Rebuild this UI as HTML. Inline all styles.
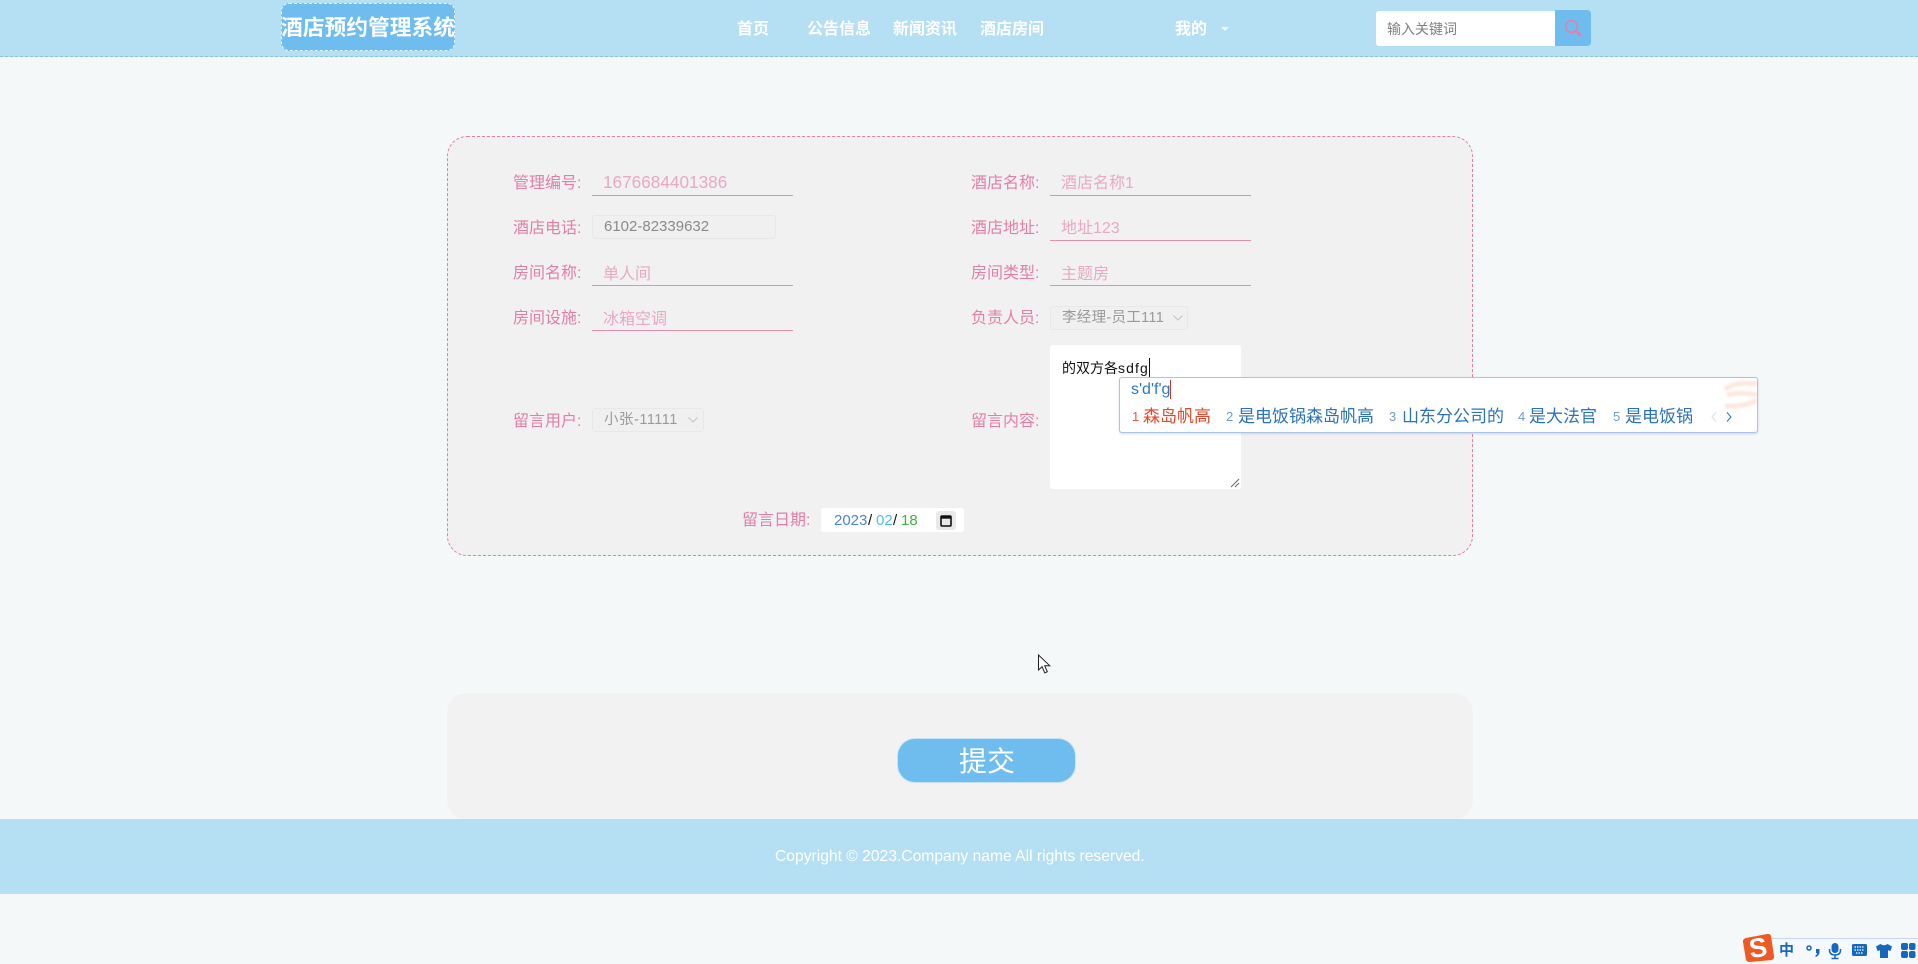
<!DOCTYPE html>
<html lang="zh-CN"><head><meta charset="utf-8"><title>留言</title>
<style>
html,body{margin:0;padding:0}
body{width:1918px;height:962px;position:relative;overflow:hidden;background:#f5f8f9;font-family:"Liberation Sans","Noto Sans CJK SC",sans-serif}
.a{position:absolute;box-sizing:border-box}
.t{position:absolute;white-space:nowrap;height:24px;line-height:24px}
.nav{color:#fff;font-size:16px;font-weight:700;top:18px}
.l{color:#e27fa8;font-size:16px}
.v{color:#e9a8c3;font-size:16px}
.u{position:absolute;height:1px;width:201px;background:#e58fb0}
.d{position:absolute;box-sizing:border-box;border:1px solid #e8e8e8;border-radius:3px;background:#f0f0f1}
.g{color:#8a8a8a;font-size:14.5px}
.n{font-size:13px;color:#6f9bd0;top:405px}
.c{font-size:17px;color:#2b72b8;top:405px}
</style></head><body>
<div class="a" style="left:0;top:0;width:1918px;height:57px;background:#b5dff3;border-bottom:1px dashed #8fc0dd"></div>
<div class="a" style="left:281px;top:3px;width:174px;height:48px;background:#6fbdef;border:1px dashed #eaf6fc;border-radius:8px"></div>
<div class="t" style="left:281px;top:16px;color:#fff;font-size:21.75px;font-weight:700">酒店预约管理系统</div>
<div class="t nav" style="left:737px">首页</div>
<div class="t nav" style="left:807px">公告信息</div>
<div class="t nav" style="left:893px">新闻资讯</div>
<div class="t nav" style="left:980px">酒店房间</div>
<div class="t nav" style="left:1175px">我的</div>
<div class="a" style="left:1221px;top:27px;width:0;height:0;border:4px solid transparent;border-top:4px solid #eef8fd"></div>
<div class="a" style="left:1376px;top:11px;width:180px;height:35px;background:#fff;border-radius:3px 0 0 3px"></div>
<div class="a" style="left:1555px;top:10px;width:36px;height:36px;background:#6fbdef;border-radius:0 4px 4px 0"></div>
<svg class="a" style="left:1563px;top:18px" width="20" height="20" viewBox="0 0 20 20" fill="none" stroke="#e57fa8" stroke-width="1.6"><circle cx="8.5" cy="8.5" r="6"/><path d="M13 13l5 5" stroke-width="2.4"/></svg>
<div class="t" style="left:1387px;top:17px;color:#808080;font-size:14px">输入关键词</div>

<div class="a" style="left:447px;top:136px;width:1026px;height:420px;background:#f1f1f2;border:1px dashed #e27fa8;border-radius:20px"></div>

<div class="t l" style="left:513px;top:172px">管理编号:</div>
<div class="t v" style="left:603px;top:170px;font-size:17.2px">1676684401386</div>
<div class="u" style="left:592px;top:195px"></div>
<div class="t l" style="left:513px;top:217px">酒店电话:</div>
<div class="d" style="left:592px;top:215px;width:184px;height:24px"></div>
<div class="t g" style="left:604px;top:215px;font-size:15px">6102-82339632</div>
<div class="t l" style="left:513px;top:262px">房间名称:</div>
<div class="t v" style="left:603px;top:263px">单人间</div>
<div class="u" style="left:592px;top:285px"></div>
<div class="t l" style="left:513px;top:307px">房间设施:</div>
<div class="t v" style="left:603px;top:308px">冰箱空调</div>
<div class="u" style="left:592px;top:330px"></div>

<div class="t l" style="left:971px;top:172px">酒店名称:</div>
<div class="t v" style="left:1061px;top:172px">酒店名称1</div>
<div class="u" style="left:1050px;top:195px"></div>
<div class="t l" style="left:971px;top:217px">酒店地址:</div>
<div class="t v" style="left:1061px;top:217px">地址123</div>
<div class="u" style="left:1050px;top:240px"></div>
<div class="t l" style="left:971px;top:262px">房间类型:</div>
<div class="t v" style="left:1061px;top:263px">主题房</div>
<div class="u" style="left:1050px;top:285px"></div>
<div class="t l" style="left:971px;top:307px">负责人员:</div>
<div class="d" style="left:1050px;top:306px;width:138px;height:24px"></div>
<div class="t g" style="left:1062px;top:306px;color:#9a9a9a;letter-spacing:.3px">李经理-员工111</div>
<svg class="a" style="left:1172px;top:314px" width="12" height="8" viewBox="0 0 12 8" fill="none" stroke="#c4c4c4"><path d="M1.500 1.500L6 6l4.500-4.500"/></svg>

<div class="t l" style="left:513px;top:410px">留言用户:</div>
<div class="d" style="left:592px;top:408px;width:112px;height:24px"></div>
<div class="t g" style="left:604px;top:408px;color:#9a9a9a;letter-spacing:.5px">小张-11111</div>
<svg class="a" style="left:687px;top:416px" width="12" height="8" viewBox="0 0 12 8" fill="none" stroke="#c4c4c4"><path d="M1.500 1.500L6 6l4.500-4.500"/></svg>
<div class="t l" style="left:971px;top:410px">留言内容:</div>
<div class="a" style="left:1050px;top:345px;width:191px;height:144px;background:#fff;border-radius:3px"></div>
<div class="t" style="left:1062px;top:356px;font-size:14px;color:#111">的双方各<span style="letter-spacing:1.100px">sdfg</span></div>
<div class="a" style="left:1149px;top:358px;width:1px;height:20px;background:#111"></div>
<svg class="a" style="left:1230px;top:478px" width="10" height="10" viewBox="0 0 10 10" stroke="#666" fill="none"><path d="M1 9L9 1M5 9l4-4"/></svg>

<div class="t l" style="left:742px;top:509px">留言日期:</div>
<div class="a" style="left:821px;top:508px;width:143px;height:24px;background:#fff;border-radius:3px"></div>
<div class="t" style="left:834px;top:509px;font-size:15px;color:#4d84d0">2023</div>
<div class="t" style="left:868px;top:509px;font-size:15px;color:#111">/</div>
<div class="t" style="left:876px;top:509px;font-size:15px;color:#4fc0e8">02</div>
<div class="t" style="left:893px;top:509px;font-size:15px;color:#111">/</div>
<div class="t" style="left:901px;top:509px;font-size:15px;color:#3db33d">18</div>
<div class="a" style="left:936px;top:511px;width:20px;height:19px;background:#e9e9e9;border-radius:3px"></div>
<svg class="a" style="left:940px;top:514px" width="12" height="13" viewBox="0 0 12 13" fill="none"><rect x="1" y="2" width="10" height="10" rx="1" stroke="#111" stroke-width="1.600"/><path d="M1 3.500h10" stroke="#111" stroke-width="2.400"/></svg>

<div class="a" style="left:1119px;top:377px;width:639px;height:56px;background:#fff;border:1px solid #a9c5e2;border-radius:3px;box-shadow:0 1px 2px rgba(90,120,170,.25);overflow:hidden">
<svg class="a" style="left:591px;top:0;filter:blur(1px)" width="47" height="32" viewBox="0 0 47 32" fill="none"><path d="M14 12c6-7 20-8 32-6M16 17c10-3 22-2 30 0M14 28c10 1 24-1 32-6" stroke="#fbd9cc" stroke-width="5" opacity=".6"/></svg>
</div>
<div class="t" style="left:1131px;top:378px;font-size:16px;color:#2d78bd">s'd'f'g</div>
<div class="a" style="left:1170px;top:380px;width:1px;height:19px;background:#c0392b"></div>
<div class="t n" style="left:1132px;color:#e8593f">1</div><div class="t c" style="left:1143px;color:#e2492c">森岛帆高</div>
<div class="t n" style="left:1226px">2</div><div class="t c" style="left:1238px">是电饭锅森岛帆高</div>
<div class="t n" style="left:1389px">3</div><div class="t c" style="left:1402px">山东分公司的</div>
<div class="t n" style="left:1518px">4</div><div class="t c" style="left:1529px">是大法官</div>
<div class="t n" style="left:1613px">5</div><div class="t c" style="left:1625px">是电饭锅</div>
<svg class="a" style="left:1710px;top:411px" width="26" height="12" viewBox="0 0 26 12" fill="none"><path d="M6 1.500L2 6l4 4.500" stroke="#d8e2ee"/><path d="M17 1.500L21 6l-4 4.500" stroke="#2d6fb5"/></svg>

<div class="a" style="left:447px;top:693px;width:1026px;height:127px;background:#f2f2f3;border-radius:20px"></div>
<div class="a" style="left:897px;top:738px;width:179px;height:45px;background:#6fbdef;border:1px solid #c5e3f5;border-radius:18px"></div>
<div class="t" style="left:959px;top:743px;height:38px;line-height:38px;color:#fff;font-size:28px">提交</div>

<div class="a" style="left:0;top:819px;width:1918px;height:75px;background:#b5dff3"></div>
<div class="t" style="left:775px;top:845px;color:#fff;font-size:15.650px">Copyright © 2023.Company name All rights reserved.</div>

<svg class="a" style="left:1037px;top:654px" width="15" height="21" viewBox="0 0 15 21"><path d="M1.500 1v15l3.600-3.400 2.600 6.200 2.600-1.100-2.600-6h5z" fill="#fff" stroke="#222" stroke-width="1"/></svg>

<div class="a" style="left:1770px;top:938px;width:148px;height:24px;background:#f5f8fc;border-top:1px solid #c9d6ee"></div>
<svg class="a" style="left:1742px;top:933px" width="32" height="29" viewBox="0 0 32 29"><path d="M4 5L25 1q3-.5 4 2l3 20q.5 3-2 4L8 29q-3 0-4-2L1 9q-.5-3 3-4z" fill="#ee5a24"/></svg>
<div class="t" style="left:1749px;top:934px;height:28px;line-height:28px;color:#fff;font-size:27px;font-weight:700;transform:rotate(-8deg)">S</div>
<div class="t" style="left:1779px;top:939px;color:#1668bf;font-size:15px;font-weight:700">中</div>
<svg class="a" style="left:1804px;top:942px" width="114" height="20" viewBox="0 0 114 20" fill="#1668bf">
<circle cx="5" cy="6" r="2" fill="none" stroke="#1668bf" stroke-width="1.500"/><path d="M12 7h3.500v3q0 3-3.500 5l-1-1q2-1 2-3h-1z"/>
<rect x="27.500" y="1" width="7" height="10" rx="3.500"/><path d="M25.500 7v1q0 5 5.500 5t5.500-5V7M31 13v3M27.500 16.500h7" fill="none" stroke="#1668bf" stroke-width="1.500"/>
<rect x="48" y="2" width="15" height="12" rx="1.500"/><path d="M50.500 5h10M50.500 8h10M52 11h7" stroke="#fff" stroke-width="1.200" stroke-dasharray="1.500 1"/>
<path d="M72 4.500l4.500-2.500q3.500 2.500 7 0l4.500 2.500-1.500 4.500-2.500-.8V16h-8V8.200l-2.500.8z"/>
<rect x="97" y="1" width="7" height="7" rx="2"/><rect x="105" y="1" width="6.500" height="7" rx="2"/><rect x="97" y="9" width="7" height="7" rx="2"/><rect x="105" y="9" width="6.500" height="7" rx="2"/>
</svg>
</body></html>
